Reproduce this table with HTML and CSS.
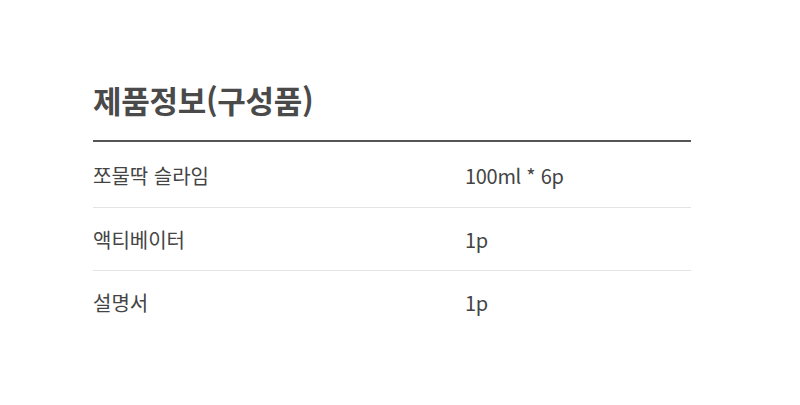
FILE: index.html
```html
<!DOCTYPE html>
<html lang="ko">
<head>
<meta charset="utf-8">
<link rel="stylesheet" href="styles.css">
</head>
<body>
<section class="info">
  <h2 class="title">제품정보(구성품)</h2>
  <div class="table">
    <div class="row"><span class="name">쪼물딱 슬라임</span><span class="value">100ml * 6p</span></div>
    <div class="row"><span class="name">액티베이터</span><span class="value">1p</span></div>
    <div class="row"><span class="name">설명서</span><span class="value">1p</span></div>
  </div>
</section>
</body>
</html>
```
FILE: styles.css
```css
html, body {
  margin: 0;
  padding: 0;
  background: #fff;
}
body {
  font-family: "Noto Sans CJK KR", "Noto Sans", sans-serif;
  color: #444;
}
.info {
  width: 598px;
  margin-left: 93px;
  padding-top: 76px;
}
.title {
  margin: 0;
  font-size: 31px;
  font-weight: 700;
  line-height: 48px;
  color: #4a4a4a;
  padding-bottom: 16px;
  border-bottom: 2px solid #555;
  letter-spacing: -0.3px;
}
.row {
  display: grid;
  grid-template-columns: 372px 1fr;
  align-items: center;
  height: 62px;
  border-bottom: 1px solid #e4e4e4;
  font-size: 20px;
  color: #444;
}
.row:first-child {
  height: 66px;
  padding-top: 2px;
  box-sizing: border-box;
}
.row:last-child {
  border-bottom: none;
}
.value {
  letter-spacing: -0.3px;
}
```
